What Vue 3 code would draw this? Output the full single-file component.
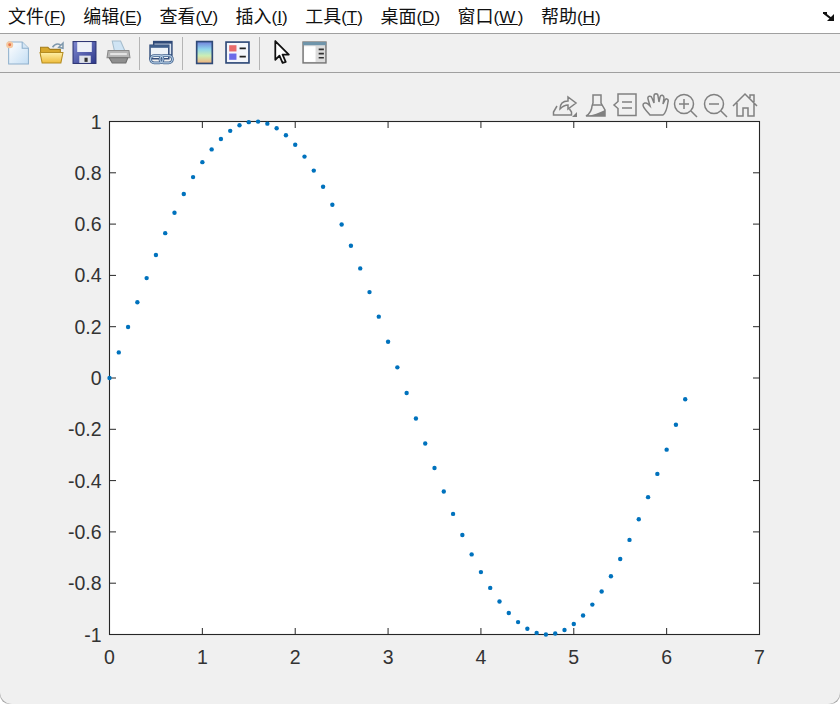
<script setup>
const menus = [
  { zh: '文件', key: 'F' },
  { zh: '编辑', key: 'E' },
  { zh: '查看', key: 'V' },
  { zh: '插入', key: 'I' },
  { zh: '工具', key: 'T' },
  { zh: '桌面', key: 'D' },
  { zh: '窗口', key: 'W' },
  { zh: '帮助', key: 'H' }
]
const L = 109.5, R = 759.5, T = 121.5, B = 634.5
const px = (x) => L + (x / 7) * (R - L)
const py = (y) => B - ((y + 1) / 2) * (B - T)
const xTicks = [0, 1, 2, 3, 4, 5, 6, 7].map((v) => ({ v, p: px(v) }))
const yVals = ['-1', '-0.8', '-0.6', '-0.4', '-0.2', '0', '0.2', '0.4', '0.6', '0.8', '1']
const yTicks = yVals.map((s) => ({ s, p: py(parseFloat(s)) }))
const dots = Array.from({ length: 63 }, (_, i) => ({ x: px(i / 10), y: py(Math.sin(i / 10)) }))
</script>

<template>
  <div class="frame">
    <div class="window">
      <nav class="menubar">
        <span v-for="m in menus" :key="m.key" class="menu">{{ m.zh }}<span class="latin">(<u>{{ m.key }}</u>)</span></span>
        <svg class="dock" width="12" height="10" viewBox="0 0 12 10">
          <path d="M0 1h4M1.500 1.500l6.500 5" fill="none" stroke="#111" stroke-width="2.200" />
          <path d="M11 2v7H4z" fill="#111" />
        </svg>
      </nav>
      <div class="toolbar">
        <svg class="tool" viewBox="0 0 24 24">
          <defs>
            <linearGradient id="pg" x1="0" y1="0" x2="1" y2="1"><stop offset="0" stop-color="#ffffff" /><stop offset="1" stop-color="#c4def4" /></linearGradient>
          </defs>
          <path d="M3.500 2h13l6 6v15h-19z" fill="url(#pg)" stroke="#8fb0cc" />
          <path d="M16.500 2v6h6" fill="#d5e6f5" stroke="#8fb0cc" />
          <circle cx="4.500" cy="4.500" r="2.400" fill="#e8744a" stroke="#f6c9a0" stroke-width="2" />
        </svg>
        <svg class="tool" viewBox="0 0 24 24">
          <defs>
            <linearGradient id="fd" x1="0" y1="0" x2="0" y2="1"><stop offset="0" stop-color="#fff0a8" /><stop offset="1" stop-color="#eebc3c" /></linearGradient>
          </defs>
          <path d="M1.500 7h7l2 2h10v6h-19z" fill="#d8a82c" stroke="#a57e1a" />
          <path d="M1 12h22l-2 10H3z" fill="url(#fd)" stroke="#b48c22" />
          <path d="M13 7c2-3 5-4 8-2l-2 2 4 1V3l-1.500 1.500" fill="none" stroke="#7f99ad" stroke-width="1.500" />
        </svg>
        <svg class="tool" viewBox="0 0 24 24">
          <defs>
            <linearGradient id="fl" x1="0" y1="0" x2="1" y2="1"><stop offset="0" stop-color="#7f88d0" /><stop offset="1" stop-color="#2f3a8c" /></linearGradient>
          </defs>
          <rect x="1" y="1.500" width="22" height="21" fill="url(#fl)" stroke="#2b3272" />
          <rect x="5" y="2" width="14" height="9.500" fill="#eef1f8" />
          <rect x="7" y="15" width="11" height="7" fill="#dfe2ea" />
          <rect x="12" y="17" width="3" height="4" fill="#333" />
        </svg>
        <svg class="tool" viewBox="0 0 24 24">
          <path d="M6 1h8l4 9H8z" fill="#cfe4f4" stroke="#a5bccc" />
          <path d="M2 10h20l1 7H1z" fill="#b5b5b5" stroke="#8a8a8a" />
          <path d="M3 17h18l-2 5H6z" fill="#8f8f8f" stroke="#6f6f6f" />
          <rect x="4" y="12.500" width="16" height="2" fill="#e4e4e4" />
        </svg>
        <i class="sep"></i>
        <svg class="tool" viewBox="0 0 24 24">
          <rect x="4.500" y="1.500" width="17.500" height="13" fill="#dbe6f2" stroke="#2f4a78" stroke-width="1.400" />
          <rect x="1" y="5" width="18" height="13" fill="#eef3f8" stroke="#2f4a78" stroke-width="1.400" />
          <rect x="4.500" y="1.500" width="17.500" height="2" fill="#2f4a78" />
          <rect x="1" y="5" width="18" height="2.500" fill="#3f5f8c" />
          <rect x="1.500" y="15" width="12" height="7" rx="3.500" fill="none" stroke="#3f5f8c" stroke-width="2.600" />
          <rect x="10.500" y="15" width="12" height="7" rx="3.500" fill="none" stroke="#3f5f8c" stroke-width="2.600" />
          <rect x="1.500" y="15" width="12" height="7" rx="3.500" fill="none" stroke="#b4cde4" stroke-width="1.100" />
          <rect x="10.500" y="15" width="12" height="7" rx="3.500" fill="none" stroke="#b4cde4" stroke-width="1.100" />
        </svg>
        <i class="sep"></i>
        <svg class="tool" viewBox="0 0 24 24">
          <defs>
            <linearGradient id="cb" x1="0" y1="0" x2="0" y2="1">
              <stop offset="0" stop-color="#6f7fdc" />
              <stop offset=".35" stop-color="#8fd6ec" />
              <stop offset=".65" stop-color="#cdeeb4" />
              <stop offset="1" stop-color="#f2b07c" />
            </linearGradient>
          </defs>
          <rect x="4.500" y="1.500" width="15" height="21" fill="url(#cb)" stroke="#2f4a78" stroke-width="1.600" />
        </svg>
        <svg class="tool" viewBox="0 0 24 24">
          <rect x="1" y="2" width="22" height="20" fill="#f4f6fb" stroke="#2f4a78" stroke-width="1.600" />
          <rect x="4" y="5" width="7" height="6" fill="#e86a6a" />
          <rect x="4" y="13" width="7" height="6" fill="#6a6ae8" />
          <path d="M14 8h6M14 16h6" stroke="#222" stroke-width="1.600" />
        </svg>
        <i class="sep"></i>
        <svg class="tool" viewBox="0 0 24 24">
          <path d="M7 1v18l4-4 3 7 3-1-3-7h6z" fill="#fff" stroke="#111" stroke-width="1.700" stroke-linejoin="round" />
        </svg>
        <svg class="tool" viewBox="0 0 24 24">
          <rect x="1" y="2" width="22" height="20" fill="#dcdcdc" stroke="#777" stroke-width="1.400" />
          <rect x="1" y="2" width="22" height="3" fill="#6f95ab" />
          <rect x="2" y="6" width="11" height="15" fill="#fff" />
          <path d="M16 9h5M16 13h5M16 17h5" stroke="#333" stroke-width="1.600" />
        </svg>
      </div>
      <main class="figure">
        <svg class="plot" width="840" height="631" viewBox="0 73 840 631">
          <g fill="none" stroke="#808080" stroke-width="1.500">
            <path d="M557 106l-3.500 6v3h18v-3l-2-3" />
            <path d="M560 109c0-5 3-8 8-8v-4l8 6-8 6v-4c-3 0-5 1-8 4z" />
            <path d="M572 117l5-5v5z" fill="#808080" stroke="none" />
            <path d="M593 95h8v8l4 7v6h-19c4-2 6-7 6-10l1-3z" />
            <path d="M592 105h10" />
            <path d="M588 116c5-1 11-3 17-6v6z" fill="#808080" stroke="none" />
            <path d="M618 94h18v21.500h-18v-7l-4-3.500 4-3.500z" />
            <path d="M622 102h10M622 108h10" />
            <path d="M650 115c-3-4-7-7-7-10 0-2 3-3 5-1l2 2-2-7c-1-3 3-4 4-1l2 5v-7c0-3 4-3 4 0l1 6 1-5c1-3 4-2 4 1l-1 6 2-4c1-2 4-1 3 2-1 7-2 11-5 13z" />
            <circle cx="684" cy="104" r="9.500" />
            <path d="M691 111l6 6M679 104h10M684 99v10" />
            <circle cx="714" cy="104" r="9.500" />
            <path d="M721 111l6 6M709 104h10" />
            <path d="M733 106l12-12 12 12M737 103v13h6v-8h5v8h6v-13M750 98v-3h4v7" />
          </g>
          <rect :x="L" :y="T" :width="R - L" :height="B - T" fill="#fff" stroke="#262626" stroke-width="1.100" />
          <g stroke="#262626">
            <template v-for="t in xTicks" :key="t.v">
              <path :d="`M${t.p} ${B}v-6.500M${t.p} ${T}v6.500`" />
              <text class="tick" :x="t.p" y="664" text-anchor="middle">{{ t.v }}</text>
            </template>
            <template v-for="t in yTicks" :key="t.s">
              <path :d="`M${L} ${t.p}h6.500M${R} ${t.p}h-6.500`" />
              <text class="tick" x="101.500" :y="t.p + 7" text-anchor="end">{{ t.s }}</text>
            </template>
          </g>
          <circle v-for="(d, i) in dots" :key="i" :cx="d.x" :cy="d.y" r="2.200" fill="#0072bd" />
        </svg>
      </main>
    </div>
  </div>
</template>

<style scoped>
.frame {
  width: 840px;
  height: 704px;
  background: #a8a8a8;
  border-radius: 0 0 9px 9px;
  overflow: hidden;
}
.window {
  width: 840px;
  height: 704px;
  display: flex;
  flex-direction: column;
  background: #f0f0f0;
  border-radius: 0 0 12px 12px;
  overflow: hidden;
}
.menubar {
  height: 33px;
  flex: none;
  box-sizing: border-box;
  display: flex;
  align-items: center;
  gap: 17.500px;
  padding: 0 8px 2px;
  background: #fff;
  font: 18px "Noto Sans CJK SC", sans-serif;
  color: #111;
  position: relative;
}
.menu { white-space: nowrap; line-height: 24px; }
.latin { font: 17px "Liberation Sans", sans-serif; }
.menu:nth-child(7) u { letter-spacing: 2.500px; }
.dock { position: absolute; right: 5px; top: 12px; }
.toolbar {
  height: 40px;
  flex: none;
  box-sizing: border-box;
  border-top: 1px solid #a0a0a0;
  border-bottom: 1px solid #a0a0a0;
  display: flex;
  align-items: center;
  gap: 8.500px;
  padding: 0 5px 2px;
  background: #f0f0f0;
}
.tool { width: 25px; height: 25px; flex: none; }
.sep { width: 1px; height: 33px; background: #b5b5b5; flex: none; margin-top: 2px; }
.figure { flex: 1; min-height: 0; }
.plot { display: block; }
.tick {
  font: 19.5px "Liberation Sans", sans-serif;
  fill: #333;
  stroke: none;
}
</style>
